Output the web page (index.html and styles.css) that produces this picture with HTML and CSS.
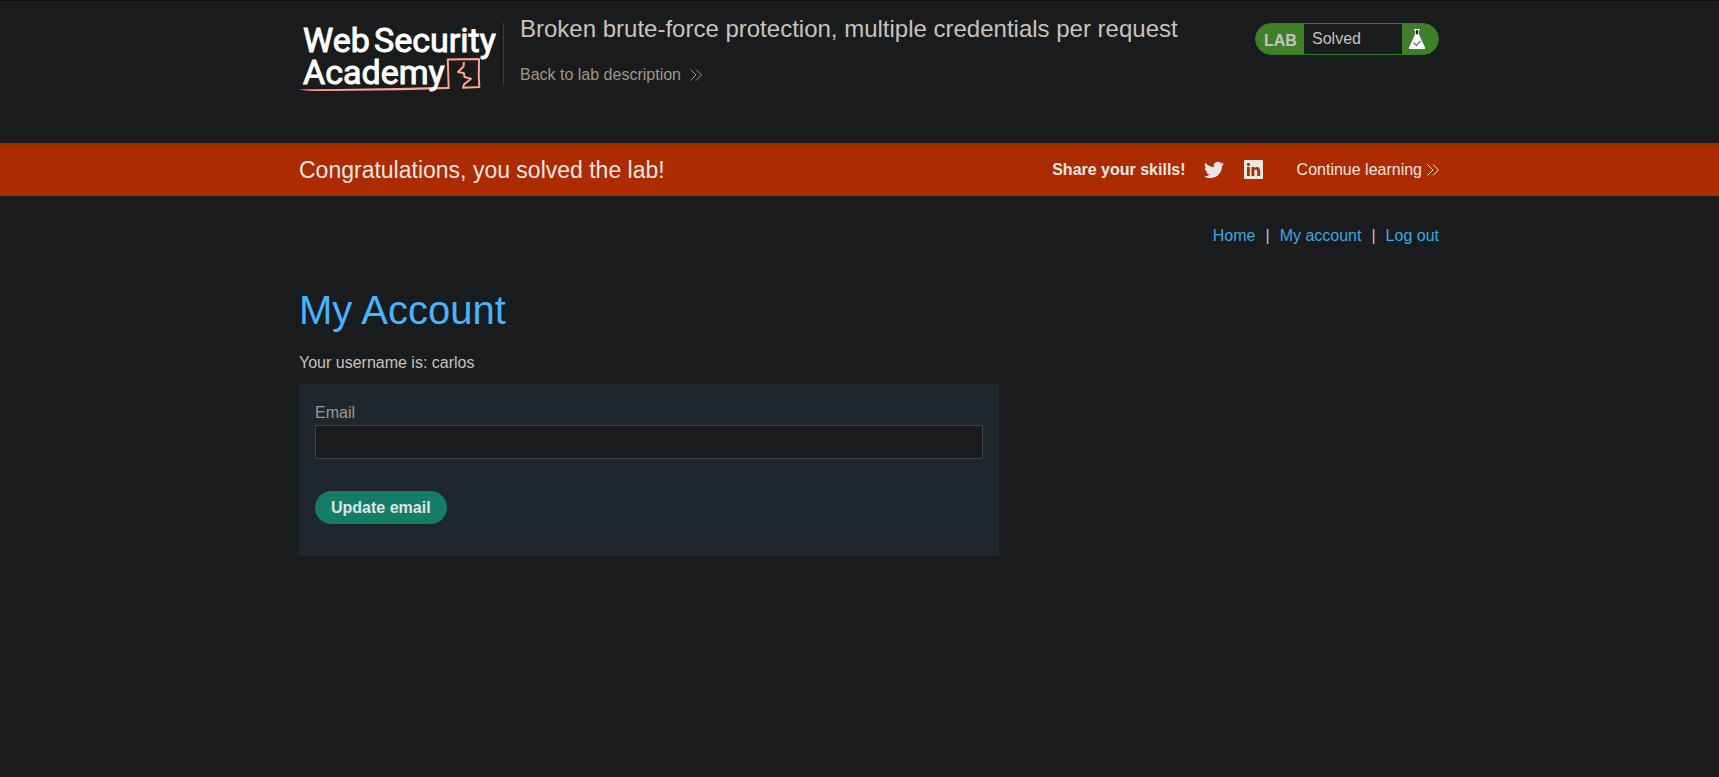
FILE: index.html
```html
<!DOCTYPE html>
<html lang="en">
<head>
<meta charset="utf-8">
<title>Broken brute-force protection, multiple credentials per request</title>
<link rel="stylesheet" href="styles.css">
</head>
<body>
<header class="lab-header">
  <div class="container header-row">
    <a class="logo" href="#" aria-label="Web Security Academy">
      <svg width="200" height="72" viewBox="0 0 200 72">
        <text class="logo-text" x="4" y="31">Web</text>
        <text class="logo-text" x="75" y="31">Security</text>
        <path class="logo-line" d="M0 68.500Q8 70 24 70L100 69.300L150 68V66L128 66.300L100 67L40 68Z"/>
        <path class="logo-mark" d="M149.700 68L148.800 38.500L180 38L179.800 55L180.300 66L164 66.700L165 63.500L172 57.700L165.500 56L165 52.300L159 51L164.500 45.500L165 41"/>
        <text class="logo-text" x="4" y="63">Academy</text>
      </svg>
    </a>
    <div class="title-block">
      <h2 class="lab-title">Broken brute-force protection, multiple credentials per request</h2>
      <a class="back-link" href="#">Back to lab description
        <svg class="chevrons" width="12" height="12" viewBox="0 0 12 12"><path d="M.5.500L6 6L.5 11.500M6 .5L11.500 6L6 11.500"/></svg>
      </a>
    </div>
    <div class="status">
      <span class="status-tag">LAB</span>
      <span class="status-text">Solved</span>
      <span class="status-icon">
        <svg width="18" height="22" viewBox="0 0 18 22"><path fill="#fff" d="M6 1h6v1.200h-1v4.300L17 19.500V21H1v-1.500L7 6.500V2.200H6z"/><path fill="#1a1b1c" d="M7.800 2.200h2.400v4H7.800z"/><path fill="none" stroke="#777" stroke-width="1.300" d="M5.500 14.500L8.500 17.500L12.500 13"/></svg>
      </span>
    </div>
  </div>
</header>
<section class="banner">
  <div class="container banner-row">
    <h4 class="banner-title">Congratulations, you solved the lab!</h4>
    <div class="banner-side">
      <strong class="share">Share your skills!</strong>
      <a class="social" href="#" aria-label="Twitter"><svg width="20" height="20" viewBox="0 0 24 24"><path d="M23.950 4.570a10 10 0 0 1-2.820.77 4.960 4.960 0 0 0 2.160-2.720c-.95.560-2 .96-3.130 1.180a4.920 4.920 0 0 0-8.380 4.480C7.690 8.100 4.070 6.130 1.640 3.160a4.820 4.820 0 0 0-.67 2.480c0 1.710.87 3.210 2.190 4.100a4.900 4.900 0 0 1-2.230-.62v.06a4.920 4.920 0 0 0 3.950 4.830 5 5 0 0 1-2.210.08 4.940 4.940 0 0 0 4.600 3.420A9.870 9.870 0 0 1 0 19.540a13.990 13.990 0 0 0 7.550 2.210c9.050 0 14-7.500 14-13.980l-.02-.64a9.940 9.940 0 0 0 2.420-2.560z"/></svg></a>
      <a class="social" href="#" aria-label="LinkedIn"><svg width="20" height="20" viewBox="0 0 20 20"><path fill-rule="evenodd" d="M2 0h16a1 1 0 0 1 1 1v17a1 1 0 0 1-1 1H1a1 1 0 0 1-1-1V1a1 1 0 0 1 1-1zM3 7v9h2.800V7zM4.400 2.800a1.600 1.600 0 1 0 0 3.200a1.600 1.600 0 0 0 0-3.200zM7.500 7v9h2.800v-4.500c0-2.600 3-2.600 3 0V16h2.800v-5.200c0-4.400-4.300-4.800-5.800-2.500V7z"/></svg></a>
      <a class="continue" href="#">Continue learning
        <svg class="chevrons" width="12" height="12" viewBox="0 0 12 12"><path d="M.5.500L6 6L.5 11.500M6 .5L11.500 6L6 11.500"/></svg>
      </a>
    </div>
  </div>
</section>
<main class="container">
  <nav class="top-links">
    <a href="#">Home</a><span>|</span><a href="#">My account</a><span>|</span><a href="#">Log out</a>
  </nav>
  <h1 class="page-title">My Account</h1>
  <p class="username">Your username is: carlos</p>
  <form class="email-form">
    <label for="email">Email</label>
    <input id="email" type="email" name="email">
    <button type="submit">Update email</button>
  </form>
</main>
</body>
</html>
```

FILE: styles.css
```css
* { box-sizing: border-box; }
body {
  margin: 0;
  background: #1a1b1c;
  color: #c8c3bc;
  font: 16px/24px "Liberation Sans", Arial, sans-serif;
}
a { color: #3aa8e0; text-decoration: none; }
h1, h2, h4, p { margin: 0; font-weight: 400; }
.container { max-width: 1201px; margin: 0 auto; padding: 0 21px 0 40px; }

.lab-header { border-top: 1px solid #0c0d0e; padding-bottom: 56px; }
.header-row { display: flex; align-items: flex-start; }
.logo {
  display: flex;
  margin-top: 22px;
  height: 62px;
  padding-right: 4px;
  border-right: 1px solid #3a3e41;
}
.logo svg { flex: none; overflow: visible; margin-top: -2px; }
.logo-text {
  font-family: Roboto, sans-serif;
  font-size: 34px;
  fill: #fff;
  stroke: #fff;
  stroke-width: 1;
}
.logo-line { fill: #ffa38f; }
.logo-mark { fill: none; stroke: #ffa38f; stroke-width: 2; stroke-linejoin: round; }
.title-block { flex: 1; padding: 12px 0 0 16px; }
.lab-title { font-size: 24px; line-height: 32px; }
.back-link { display: inline-flex; align-items: center; gap: 9px; margin-top: 18px; color: #a09787; }
.chevrons { fill: none; stroke: currentColor; stroke-width: 1; }

.status {
  display: flex;
  width: 184px;
  height: 32px;
  margin-top: 22px;
  border: 1px solid #26801f;
  border-radius: 16px;
  background: #40802a;
  line-height: 30px;
  overflow: hidden;
}
.status-tag { width: 48px; padding: 2px 0 0 8px; font-weight: 700; }
.status-text { flex: 1; padding-left: 8px; background: #1a1b1c; }
.status-icon { display: flex; width: 36px; padding: 4px 0 0 6px; }

.banner { background: #ac2b00; border-top: 3px solid #a42b00; color: #e8e6e3; }
.banner-row { display: flex; justify-content: space-between; align-items: center; height: 50px; padding-bottom: 2px; }
.banner-title { font-size: 23px; }
.banner-side { display: flex; align-items: center; }
.share { margin-right: 18px; }
.social { display: flex; margin-right: 20px; fill: #e8e6e3; }
.continue { display: flex; align-items: center; gap: 5px; margin-left: 13px; color: #e8e6e3; }

.top-links { display: flex; justify-content: flex-end; gap: 10px; padding-top: 28px; }
.page-title { margin-top: 38px; font-size: 40px; line-height: 48px; color: #48b4ff; }
.username { margin-top: 17px; }
.email-form {
  display: flex;
  flex-direction: column;
  align-items: flex-start;
  max-width: 700px;
  margin-top: 9px;
  padding: 17px 16px 32px;
  background: #1e282c;
}
.email-form label { color: #a09787; }
.email-form input {
  width: 100%;
  height: 34px;
  padding: 0 8px;
  border: 1px solid #3b4144;
  background: #1a1b1c;
  color: #c8c3bc;
  font: inherit;
}
.email-form button {
  height: 33px;
  margin-top: 32px;
  padding: 0 16px;
  border: 0;
  border-radius: 17px;
  background: #137d67;
  color: #e0e4e0;
  font: inherit;
  font-weight: 700;
}
```
